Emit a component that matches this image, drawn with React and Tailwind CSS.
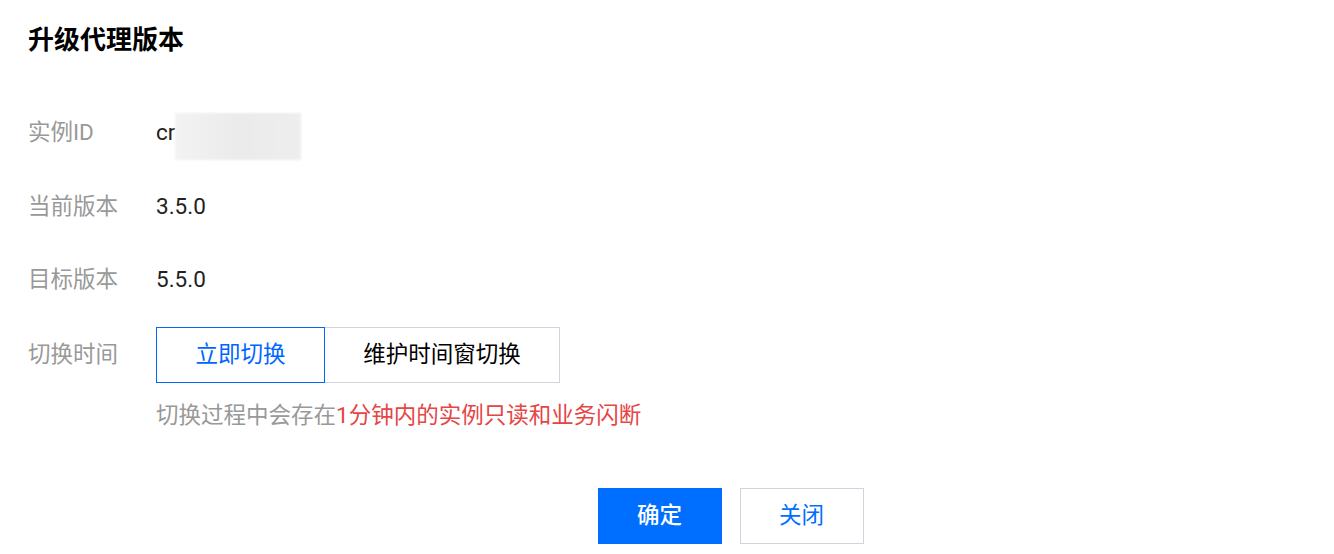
const font = { fontFamily: 'Roboto, "Noto Sans CJK SC", sans-serif' };

function Row({ label, children, className = '' }) {
  return (
    <div className={`flex items-center ${className}`}>
      <div className="w-[128px] shrink-0 text-[22.5px] text-[#999999]">{label}</div>
      {children}
    </div>
  );
}

export default function App() {
  return (
    <div className="w-[1334px] h-[554px] bg-white relative overflow-hidden" style={font}>
      <div className="pl-[28px] pt-[24px]">
        <h2 className="text-[26px] font-bold text-black leading-[32px]">升级代理版本</h2>

        <div className="mt-[53px] flex flex-col">
          <Row label="实例ID" className="h-[48px]">
            <div className="flex items-center text-[22.5px] text-[#222]">
              <span>cr</span>
              <div className="w-[126px] h-[47px] mt-[6px] blur-[1px] bg-gradient-to-r from-[#f3f3f3] via-[#ebebeb] to-[#eeeeee]" />
            </div>
          </Row>

          <Row label="当前版本" className="h-[48px] mt-[26px]">
            <span className="text-[22.5px] text-[#222]">3.5.0</span>
          </Row>

          <Row label="目标版本" className="h-[48px] mt-[25px]">
            <span className="text-[22.5px] text-[#222]">5.5.0</span>
          </Row>

          <Row label="切换时间" className="mt-[23px]">
            <div className="flex">
              <button className="w-[169px] h-[56px] border border-[#0066ff] text-[#0066ff] text-[22.5px] bg-white">
                立即切换
              </button>
              <button className="w-[235px] h-[56px] border border-l-0 border-[#cfd5de] text-[#000] text-[22.5px] bg-white">
                维护时间窗切换
              </button>
            </div>
          </Row>

          <div className="pl-[128px] mt-[17px] text-[22.5px] leading-[30px]">
            <span className="text-[#999999]">切换过程中会存在</span>
            <span className="text-[#e54545]">1分钟内的实例只读和业务闪断</span>
          </div>
        </div>
      </div>

      <div className="flex justify-center gap-[18px] mt-[58px] pl-[127px]">
        <button className="w-[124px] h-[56px] bg-[#006eff] text-white text-[22.5px] font-medium">确定</button>
        <button className="w-[124px] h-[56px] border border-[#cfd5de] bg-white text-[#006eff] text-[22.5px]">关闭</button>
      </div>
    </div>
  );
}
